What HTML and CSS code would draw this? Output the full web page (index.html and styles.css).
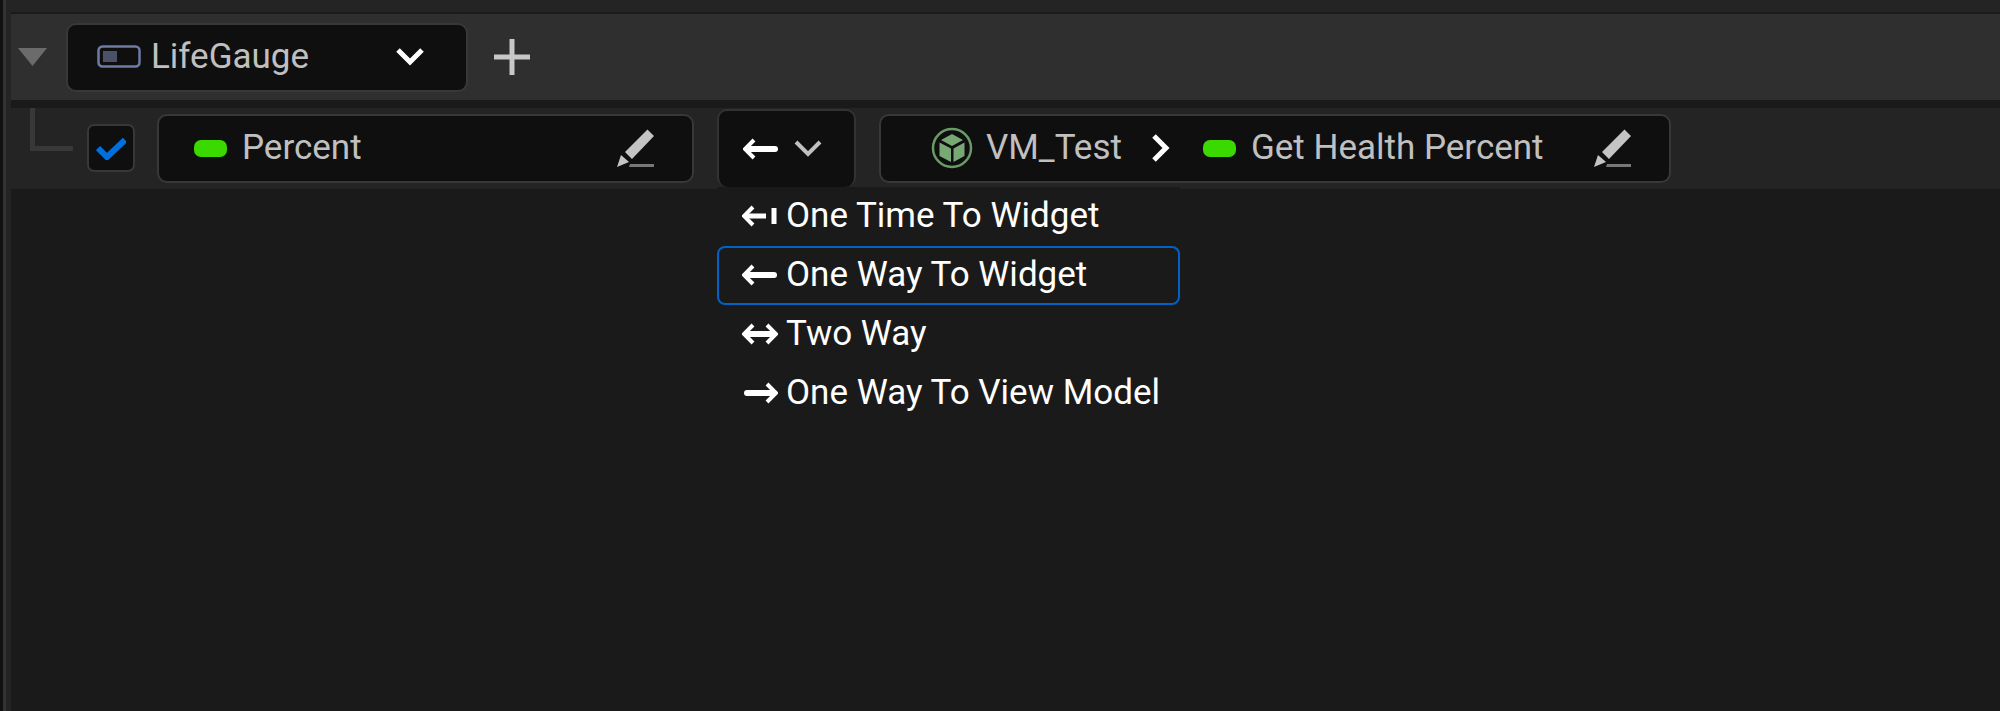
FILE: index.html
```html
<!DOCTYPE html>
<html lang="en">
<head>
<meta charset="utf-8">
<title>View Bindings</title>
<link rel="stylesheet" href="styles.css">
</head>
<body>
<svg class="defs" aria-hidden="true">
  <symbol id="pencil" viewBox="0 0 40 40">
    <path fill="#c4c4c4" d="M31.500 1.500 38 8 16 31 9 24zM5 27l8 7-12 5z"/>
    <path fill="#777" d="M14 36h24v3H13z"/>
  </symbol>
  <symbol id="arrow-left" viewBox="0 0 36 24">
    <path fill="none" stroke="#fff" stroke-width="6" stroke-linecap="round" d="M5 12h27"/>
    <path fill="none" stroke="#fff" stroke-width="4" d="M11 3 2 12l9 9"/>
  </symbol>
</svg>
<main class="panel">
  <header class="group">
    <button class="expander" aria-label="Collapse LifeGauge">
      <svg width="29" height="18" viewBox="0 0 29 18"><path fill="#6b6b6b" d="M0 0h29L14.500 18z"/></svg>
    </button>
    <label class="field widget">
      <svg width="44" height="24" viewBox="0 0 44 24"><rect x="1.500" y="1.500" width="41" height="20" rx="4" fill="none" stroke="#6d7ba6" stroke-width="2.500"/><rect x="6" y="6" width="14" height="11" fill="#4b5268"/></svg>
      <select class="picker" aria-label="Widget"><option>LifeGauge</option></select>
      <svg width="30" height="20" viewBox="0 0 30 20"><path fill="none" stroke="#fff" stroke-width="5" d="m3 3 12 12L27 3"/></svg>
    </label>
    <button class="add" aria-label="Add binding">
      <svg width="38" height="38" viewBox="0 0 38 38"><path fill="none" stroke="#c8c8c8" stroke-width="5" d="M19 1v36M1 19h36"/></svg>
    </button>
  </header>
  <section class="binding">
    <span class="branch"></span>
    <label class="check">
      <input type="checkbox" checked aria-label="Enable binding">
      <svg width="30" height="24" viewBox="0 0 30 24"><path fill="none" stroke="#0070e0" stroke-width="6" d="m2 12 9 9L29 4"/></svg>
    </label>
    <div class="field target">
      <span class="pill"></span>
      <span class="name">Percent</span>
      <button class="edit" aria-label="Edit target"><svg width="40" height="40"><use href="#pencil"/></svg></button>
    </div>
    <div class="mode">
      <button class="mode-button" aria-label="Binding mode" aria-haspopup="listbox" aria-expanded="true">
        <svg width="36" height="24"><use href="#arrow-left"/></svg>
        <svg width="28" height="20" viewBox="0 0 28 20"><path fill="none" stroke="#c0c0c0" stroke-width="4" d="m2 3 12 12L26 3"/></svg>
      </button>
      <div class="menu" role="listbox" aria-label="Binding mode">
        <button class="item" role="option"><svg width="36" height="24" viewBox="0 0 36 24"><path fill="none" stroke="#fff" stroke-width="5" d="M3 12h21M32 4v16"/><path fill="none" stroke="#fff" stroke-width="4" d="m11 3-9 9 9 9"/></svg>One Time To Widget</button>
        <button class="item selected" role="option" aria-selected="true"><svg width="36" height="24"><use href="#arrow-left"/></svg>One Way To Widget</button>
        <button class="item" role="option"><svg width="36" height="24" viewBox="0 0 36 24"><path fill="none" stroke="#fff" stroke-width="6" d="M3 12h30"/><path fill="none" stroke="#fff" stroke-width="4" d="m11 3-9 9 9 9M25 3l9 9-9 9"/></svg>Two Way</button>
        <button class="item" role="option"><svg width="36" height="24" viewBox="0 0 36 24"><path fill="none" stroke="#fff" stroke-width="6" stroke-linecap="round" d="M5 12h27"/><path fill="none" stroke="#fff" stroke-width="4" d="m25 3 9 9-9 9"/></svg>One Way To View Model</button>
      </div>
    </div>
    <div class="field source">
      <svg width="42" height="42" viewBox="0 0 42 42"><circle cx="21" cy="21" r="19" fill="none" stroke="#6a9a66" stroke-width="2.500"/><path fill="#78a873" d="m21 7 11 6-11 6-11-6zM8.500 15.500 20 21.500V35L8.500 29zM33.500 15.500 22.500 21.500V35l11-6z"/></svg>
      <span class="view-model">VM_Test</span>
      <svg class="separator" width="20" height="30" viewBox="0 0 20 30"><path fill="none" stroke="#fff" stroke-width="5" d="m3 3 12 12L3 27"/></svg>
      <span class="pill"></span>
      <span class="name">Get Health Percent</span>
      <button class="edit" aria-label="Edit source"><svg width="40" height="40"><use href="#pencil"/></svg></button>
    </div>
  </section>
</main>
</body>
</html>
```
FILE: styles.css
```css
* {
  box-sizing: border-box;
}

body {
  margin: 0;
  min-height: 100vh;
  display: flex;
  background: #1a1a1a;
  border-left: 3px solid #111;
  color: #c0c0c0;
  font: 35px/40px Roboto, sans-serif;
}

svg {
  display: block;
  flex: none;
}

.defs {
  display: none;
}

button,
select {
  margin: 0;
  padding: 0;
  border: 0;
  background: none;
  color: inherit;
  font: inherit;
}

.panel {
  flex: 1;
  border-left: 3px solid #333;
  box-shadow: inset 5px 0 #242424;
  padding-left: 5px;
}

.group {
  display: flex;
  align-items: center;
  height: 108px;
  border-top: 12px solid #242424;
  border-bottom: 8px solid #1a1a1a;
  background: #2f2f2f;
  box-shadow: inset 0 2px #1a1a1a;
  padding: 2px 0 0 7px;
}

.expander {
  margin-right: 19px;
}

.field {
  display: flex;
  align-items: center;
  height: 69px;
  border: 2px solid #383838;
  border-radius: 10px;
  background: #0f0f0f;
}

.widget {
  width: 402px;
  padding: 0 41px 0 29px;
}

.picker {
  flex: 1;
  appearance: none;
  margin-left: 10px;
  outline: 0;
}

.add {
  margin-left: 25px;
}

.binding {
  display: flex;
  align-items: center;
  height: 81px;
  background: #242424;
  padding: 0 0 1px 19px;
}

.branch {
  align-self: flex-start;
  width: 43px;
  height: 43px;
  border: solid #383838;
  border-width: 0 0 5px 5px;
}

.check {
  display: grid;
  place-items: center;
  margin: 0 22px 0 14px;
}

.check > * {
  grid-area: 1 / 1;
}

.check input {
  appearance: none;
  width: 48px;
  height: 48px;
  margin: 0;
  border: 2px solid #383838;
  border-radius: 7px;
  background: #0f0f0f;
}

.check svg {
  z-index: 1;
}

.target {
  width: 537px;
  padding: 0 36px 0 35px;
}

.pill {
  flex: none;
  width: 33px;
  height: 17px;
  border-radius: 7px;
  background: #3ad900;
}

.name {
  flex: 1;
  margin-left: 15px;
  white-space: nowrap;
}

.mode {
  position: relative;
  margin: 0 23px 0 23px;
}

.mode-button {
  display: flex;
  align-items: center;
  gap: 15px;
  width: 139px;
  height: 78px;
  border: 2px solid #333;
  border-bottom: 0;
  border-radius: 10px;
  background: #0f0f0f;
  padding: 0 0 0 24px;
}

.menu {
  position: absolute;
  top: 100%;
  left: 0;
  width: max-content;
  background: #1a1a1a;
}

.item {
  display: flex;
  align-items: center;
  gap: 8px;
  width: 100%;
  height: 59px;
  border: 2px solid transparent;
  border-radius: 8px;
  padding: 0 18px 2px 23px;
  color: #fff;
}

.selected {
  border-color: #0062c4;
}

.source {
  width: 792px;
  padding: 0 36px 0 50px;
}

.view-model {
  margin-left: 13px;
}

.separator {
  margin: 0 32px 0 29px;
}
```
